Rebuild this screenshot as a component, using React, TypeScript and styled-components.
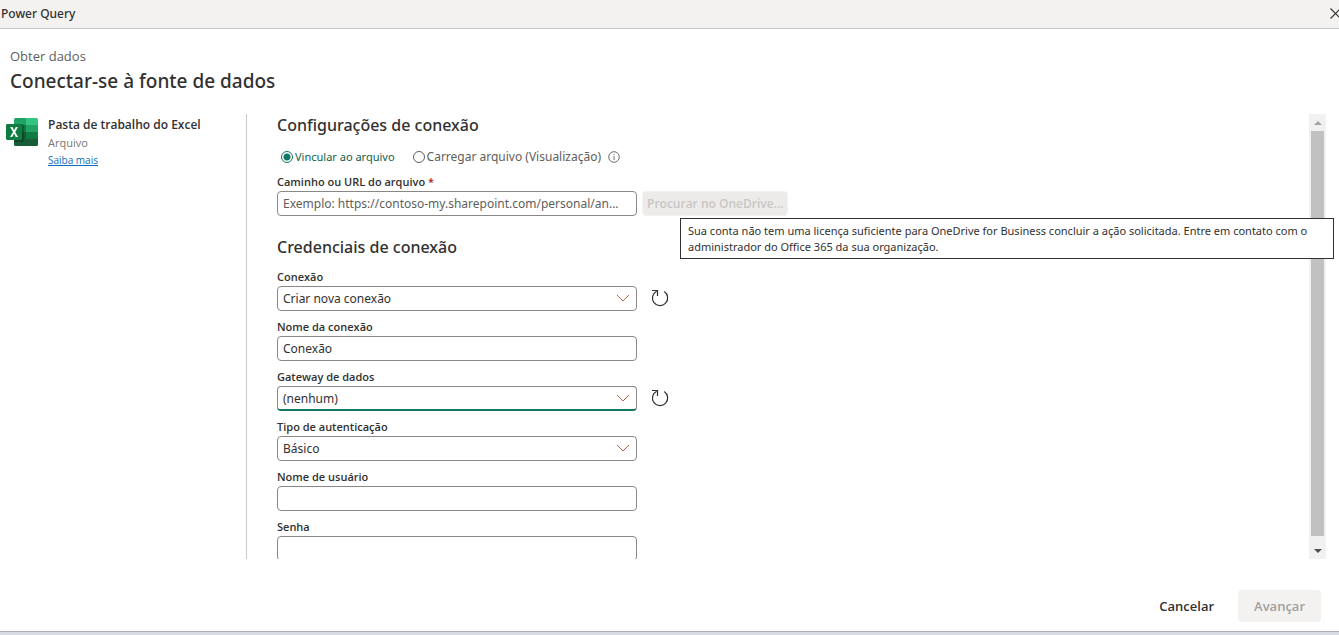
import React, { useId } from "react";
import styled, { createGlobalStyle } from "styled-components";

const GlobalStyle = createGlobalStyle`
  *, *::before, *::after { box-sizing: border-box; }
  body { margin: 0; background: #fff; color: #323130; }
  body, button { font-family: "Open Sans", "Noto Sans", sans-serif; }
  input, select { font-family: "Noto Sans", "Open Sans", sans-serif; }
`;

const Page = styled.div`
  position: relative;
  height: 100vh;
  display: flex;
  flex-direction: column;
  border-bottom: 3px solid #d6dbe4;
`;

const TitleBar = styled.header`
  display: flex;
  flex: none;
  justify-content: space-between;
  align-items: center;
  height: 29px;
  padding-left: 1px;
  overflow: hidden;
  background: #f3f2f1;
  border-bottom: 1px solid #c8c8c8;
  font-family: "Noto Sans", sans-serif;
  font-size: 12px;
  line-height: 18px;
  font-weight: 500;
`;

const IconButton = styled.button`
  display: flex;
  padding: 0;
  border: 0;
  background: none;
  color: #323130;
`;

const Heading = styled.div`
  flex: none;
  height: 85px;
  padding: 17px 10px 0;
`;

const Crumb = styled.p`
  margin: 0;
  font-size: 13px;
  line-height: 20px;
  color: #605e5c;
`;

const PageTitle = styled.h1`
  margin: 0;
  font-family: "Noto Sans", sans-serif;
  font-size: 19px;
  line-height: 30px;
  font-weight: 500;
`;

const Body = styled.div`
  flex: 1;
  min-height: 0;
  display: flex;
  padding-right: 13px;
`;

const Source = styled.aside`
  flex: none;
  display: flex;
  gap: 10px;
  width: 247px;
  padding: 2px 6px 0;
  border-right: 1px solid #c8c8c8;
`;

const SourceIcon = styled.div`
  padding-top: 2px;
`;

const SourceText = styled.div`
  display: flex;
  flex-direction: column;
  align-items: flex-start;
  font-size: 11px;
  line-height: 18px;
  color: #797775;
`;

const SourceName = styled.strong`
  font-size: 12px;
  font-weight: 600;
  color: #323130;
`;

const Link = styled.a`
  font-size: 10px;
  line-height: 16px;
  color: #0f6cbd;
`;

const Form = styled.main`
  flex: 1;
  min-width: 0;
  overflow: hidden;
  padding-left: 30px;
`;

const SectionTitle = styled.h2<{ $spaced?: boolean }>`
  margin: ${(p) => (p.$spaced ? "20px 0 10px" : "0 0 12px")};
  font-family: "Noto Sans", sans-serif;
  font-size: 16px;
  line-height: 22px;
  font-weight: 500;
`;

const RadioRow = styled.div`
  display: flex;
  align-items: center;
  height: 18px;
  margin-bottom: 7px;
  padding-left: 4px;
`;

const RadioLabel = styled.label<{ $size: number }>`
  display: flex;
  align-items: center;
  gap: 2px;
  margin-right: 18px;
  font-family: "Noto Sans", sans-serif;
  font-size: ${(p) => p.$size}px;
  line-height: 18px;
  color: #605e5c;
  &:has(input:checked) { color: #0f5e4c; }
  & + & { margin-right: 7px; }
`;

const Radio = styled.input`
  appearance: none;
  width: 12px;
  height: 12px;
  margin: 0;
  border: 1px solid #605e5c;
  border-radius: 50%;
  background: #fff;
  &:checked {
    border-color: #117865;
    background: radial-gradient(circle, #117865 3px, #fff 4px);
  }
`;

const Field = styled.div`
  display: flex;
  flex-direction: column;
  margin-bottom: 7px;
`;

const FieldLabel = styled.label`
  font-size: 11px;
  line-height: 18px;
  font-weight: 600;
`;

const Required = styled.span`
  color: #a4262c;
`;

const FieldLine = styled.div<{ $gap: number }>`
  display: flex;
  align-items: center;
  gap: ${(p) => p.$gap}px;
`;

const ControlBox = styled.div`
  display: grid;
  align-items: center;
  width: 360px;
  height: 25px;
  & > * { grid-area: 1 / 1; }
  & > svg { justify-self: end; margin: 0 7px 2px 0; pointer-events: none; }
`;

const controlLook = `
  width: 100%;
  height: 25px;
  padding: 0 5px;
  border: 1px solid #8a8886;
  border-radius: 4px;
  background: #fff;
  color: #323130;
  outline: none;
`;

const TextInput = styled.input`
  ${controlLook}
  font-size: 12px;
  text-overflow: ellipsis;
  &::placeholder { color: #605e5c; opacity: 1; }
`;

const Select = styled.select<{ $active?: boolean }>`
  ${controlLook}
  appearance: none;
  font-size: 12px;
  ${(p) => p.$active && "border-bottom: 2px solid #117865;"}
`;

const BrowseButton = styled.button`
  height: 25px;
  padding: 0 4px;
  border: 1px solid #f3f2f1;
  border-radius: 4px;
  background: #edebe9;
  color: #c8c6c4;
  font-size: 12px;
  font-weight: 600;
  white-space: nowrap;
`;

const Scrollbar = styled.div`
  flex: none;
  display: flex;
  flex-direction: column;
  width: 17px;
  background: #f1f1f1;
`;

const ScrollArrow = styled.button`
  display: flex;
  justify-content: center;
  align-items: center;
  height: 17px;
  padding: 0;
  border: 0;
  background: none;
`;

const ScrollTrack = styled.div`
  flex: 1;
  padding: 0 2px 6px;
`;

const ScrollThumb = styled.div`
  height: 100%;
  background: #c1c1c1;
`;

const Tooltip = styled.div`
  position: absolute;
  top: 218px;
  left: 680px;
  right: 5px;
  padding: 4px 7px 3px;
  border: 1px solid #323130;
  background: #fff;
  font-family: "Noto Sans", sans-serif;
  font-size: 11px;
  line-height: 16px;
`;

const Footer = styled.footer`
  flex: none;
  display: flex;
  justify-content: flex-end;
  gap: 8px;
  height: 73px;
  padding: 31px 18px 0;
  border-bottom: 1px solid #a9adb5;
`;

const FooterButton = styled.button`
  height: 32px;
  padding: 0 16px;
  border: 0;
  border-radius: 4px;
  background: #fff;
  color: #323130;
  font-size: 13px;
  font-weight: 600;
  &:disabled { background: #f3f2f1; color: #a19f9d; }
`;

const ExcelIcon = () => (
  <svg width="32" height="28" viewBox="0 0 32 28" aria-hidden="true">
    <path d="M9.500 0H20V7H8V1.500Q8 0 9.500 0Z" fill="#21a366" />
    <path d="M20 0H30.500Q32 0 32 1.500V7H20Z" fill="#33c481" />
    <path d="M8 7H20V14H8Z" fill="#107c41" />
    <path d="M20 7H32V14H20Z" fill="#21a366" />
    <path d="M20 14H32V21H20Z" fill="#107c41" />
    <path d="M8 14H20V21H32V26.500Q32 28 30.500 28H9.500Q8 28 8 26.500Z" fill="#185c37" />
    <path d="M8 6H16.500Q18 6 18 7.500V22.500Q18 24 16.500 24H8Z" fill="#000" opacity="0.25" />
    <rect y="6" width="16" height="16" rx="1.400" fill="#107c41" />
    <path d="M4 19L7 14L4.200 9H6.500L8.100 12.200L9.800 9H12L9.200 14L12.100 19H9.800L8 15.600L6.200 19Z" fill="#fff" />
  </svg>
);

const Chevron = () => (
  <svg width="14" height="8" viewBox="0 0 14 8" fill="none" stroke="#b5694a" aria-hidden="true">
    <path d="M1 1L7 7L13 1" />
  </svg>
);

const RefreshIcon = () => (
  <svg width="18" height="20" viewBox="0 0 18 20" fill="none" stroke="#323130" strokeWidth="1.200" aria-hidden="true">
    <path d="M1 1.500H6.500V7" />
    <path d="M5.600 2.200A7.600 7.600 0 1 0 13.200 2.600" />
  </svg>
);

const InfoIcon = () => (
  <svg width="12" height="12" viewBox="0 0 12 12" fill="none" stroke="#605e5c" aria-hidden="true">
    <circle cx="6" cy="6" r="5.300" strokeWidth="0.900" />
    <path d="M6 5V9M6 3V4" strokeWidth="0.900" />
  </svg>
);

function TextField({ label, value, type = "text" }: { label: string; value?: string; type?: string }) {
  const id = useId();
  return (
    <Field>
      <FieldLabel htmlFor={id}>{label}</FieldLabel>
      <ControlBox>
        <TextInput id={id} type={type} defaultValue={value} />
      </ControlBox>
    </Field>
  );
}

function SelectField({ label, value, refresh, active }: { label: string; value: string; refresh?: boolean; active?: boolean }) {
  const id = useId();
  return (
    <Field>
      <FieldLabel htmlFor={id}>{label}</FieldLabel>
      <FieldLine $gap={14}>
        <ControlBox>
          <Select id={id} $active={active}>
            <option>{value}</option>
          </Select>
          <Chevron />
        </ControlBox>
        {refresh && (
          <IconButton type="button" aria-label="Atualizar">
            <RefreshIcon />
          </IconButton>
        )}
      </FieldLine>
    </Field>
  );
}

export default function App() {
  return (
    <Page>
      <GlobalStyle />
      <TitleBar>
        <span>Power Query</span>
        <IconButton type="button" aria-label="Fechar">
          <svg width="9" height="12" viewBox="0 0 9 12" fill="none" stroke="#323130" strokeWidth="1.100">
            <path d="M0.500 0.500L10.500 10.500M0.500 10.500L10.500 0.500" />
          </svg>
        </IconButton>
      </TitleBar>
      <Heading>
        <Crumb>Obter dados</Crumb>
        <PageTitle>Conectar-se à fonte de dados</PageTitle>
      </Heading>
      <Body>
        <Source>
          <SourceIcon>
            <ExcelIcon />
          </SourceIcon>
          <SourceText>
            <SourceName>Pasta de trabalho do Excel</SourceName>
            <span>Arquivo</span>
            <Link href="#">Saiba mais</Link>
          </SourceText>
        </Source>
        <Form>
          <SectionTitle>Configurações de conexão</SectionTitle>
          <RadioRow>
            <RadioLabel $size={11}>
              <Radio type="radio" name="origin" defaultChecked />
              Vincular ao arquivo
            </RadioLabel>
            <RadioLabel $size={12}>
              <Radio type="radio" name="origin" />
              Carregar arquivo (Visualização)
            </RadioLabel>
            <InfoIcon />
          </RadioRow>
          <Field>
            <FieldLabel htmlFor="path">
              Caminho ou URL do arquivo <Required>*</Required>
            </FieldLabel>
            <FieldLine $gap={5}>
              <ControlBox>
                <TextInput id="path" placeholder="Exemplo: https://contoso-my.sharepoint.com/personal/an..." />
              </ControlBox>
              <BrowseButton type="button" disabled aria-describedby="license-tip">
                Procurar no OneDrive...
              </BrowseButton>
            </FieldLine>
          </Field>
          <SectionTitle $spaced>Credenciais de conexão</SectionTitle>
          <SelectField label="Conexão" value="Criar nova conexão" refresh />
          <TextField label="Nome da conexão" value="Conexão" />
          <SelectField label="Gateway de dados" value="(nenhum)" refresh active />
          <SelectField label="Tipo de autenticação" value="Básico" />
          <TextField label="Nome de usuário" />
          <TextField label="Senha" type="password" />
        </Form>
        <Scrollbar>
          <ScrollArrow type="button" aria-label="Rolar para cima">
            <svg width="8" height="4" viewBox="0 0 8 4" fill="#a3a3a3"><path d="M0 4L4 0L8 4Z" /></svg>
          </ScrollArrow>
          <ScrollTrack>
            <ScrollThumb />
          </ScrollTrack>
          <ScrollArrow type="button" aria-label="Rolar para baixo">
            <svg width="8" height="4" viewBox="0 0 8 4" fill="#505050"><path d="M0 0L4 4L8 0Z" /></svg>
          </ScrollArrow>
        </Scrollbar>
      </Body>
      <Footer>
        <FooterButton type="button">Cancelar</FooterButton>
        <FooterButton type="button" disabled>Avançar</FooterButton>
      </Footer>
      <Tooltip id="license-tip" role="tooltip">
        Sua conta não tem uma licença suficiente para OneDrive for Business concluir a ação solicitada. Entre em contato com o administrador do Office 365 da sua organização.
      </Tooltip>
    </Page>
  );
}
